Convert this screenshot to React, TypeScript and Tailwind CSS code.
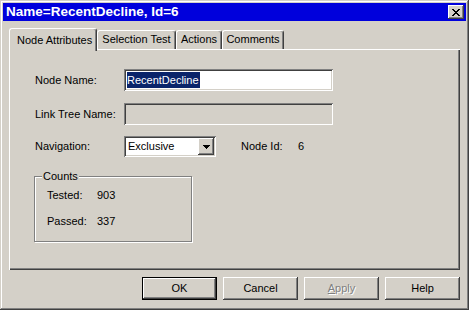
import React from "react";

const raised =
  "shadow-[inset_-1px_-1px_#404040,inset_1px_1px_#ffffff,inset_-2px_-2px_#808080,inset_2px_2px_#d4d0c8]";
const sunken =
  "shadow-[inset_1px_1px_#808080,inset_-1px_-1px_#ffffff,inset_2px_2px_#404040,inset_-2px_-2px_#d4d0c8]";

function CloseGlyph() {
  return (
    <svg width="8" height="7" viewBox="0 0 8 7" shapeRendering="crispEdges">
      <path
        d="M0 0h2v1H0zM6 0h2v1H6zM1 1h2v1H1zM5 1h2v1H5zM2 2h4v1H2zM3 3h2v1H3zM2 4h4v1H2zM1 5h2v1H1zM5 5h2v1H5zM0 6h2v1H0zM6 6h2v1H6z"
        fill="#000"
      />
    </svg>
  );
}

function DownArrow() {
  return (
    <svg width="7" height="4" viewBox="0 0 7 4" shapeRendering="crispEdges">
      <path d="M0 0h7v1H0zM1 1h5v1H1zM2 2h3v1H2zM3 3h1v1H3z" fill="#000" />
    </svg>
  );
}

function Tab({ label, width }: { label: string; width: string }) {
  return (
    <div
      className={`${width} h-[19px] flex items-center justify-center border-l border-t border-white border-r border-r-[#404040] rounded-t-[3px] shadow-[inset_-1px_0_#808080] pb-[1px]`}
    >
      {label}
    </div>
  );
}

function Button({ label, isDefault, disabled }: { label: React.ReactNode; isDefault?: boolean; disabled?: boolean }) {
  return (
    <div
      className={`w-[75px] h-[23px] flex items-center justify-center ${
        isDefault ? "border border-black" : ""
      } ${disabled ? "text-[#808080] [text-shadow:1px_1px_#ffffff]" : "text-black"}`}
    >
      <div className={`w-full h-full flex items-center justify-center ${raised}`}>{label}</div>
    </div>
  );
}

export default function App() {
  return (
    <div className="w-[469px] h-[310px] bg-[#d4d0c8] p-[3px] flex flex-col font-['Liberation_Sans',Arial,sans-serif] text-[11px] text-black shadow-[inset_-1px_-1px_#404040,inset_1px_1px_#d4d0c8,inset_-2px_-2px_#808080,inset_2px_2px_#ffffff] overflow-hidden">
      {/* title bar */}
      <div className="h-[18px] bg-[#0000dc] flex items-center justify-between pl-[3px] pr-[2px]">
        <span className="text-white font-bold text-[13.5px] leading-none">Name=RecentDecline, Id=6</span>
        <div className={`w-[16px] h-[14px] bg-[#d4d0c8] flex items-center justify-center ${raised}`}>
          <CloseGlyph />
        </div>
      </div>

      <div className="flex flex-col px-[6px] pt-[7px]">
        {/* tabs */}
        <div className="flex items-end h-[21px]">
          <div className="relative z-10 w-[88px] h-[23px] mb-[-2px] bg-[#d4d0c8] flex items-start pt-[3px] pl-[7px] border-l border-t border-white border-r border-r-[#404040] rounded-t-[3px] shadow-[inset_-1px_0_#808080]">
            Node Attributes
          </div>
          <Tab label="Selection Test" width="w-[79px]" />
          <Tab label="Actions" width="w-[46px]" />
          <Tab label="Comments" width="w-[62px]" />
        </div>

        {/* panel */}
        <div className="h-[221px] bg-[#d4d0c8] shadow-[inset_1px_1px_#ffffff,inset_-1px_-1px_#404040,inset_-2px_-2px_#808080] pl-[26px] pt-[20px] flex flex-col">
          <div className="flex items-center h-[22px]">
            <span className="w-[89px]">Node Name:</span>
            <div className={`w-[209px] h-[22px] bg-white flex items-center pl-[3px] ${sunken}`}>
              <span className="bg-[#0a246a] text-white leading-[16px] pr-[1px]">RecentDecline</span>
            </div>
          </div>

          <div className="flex items-center h-[22px] mt-[12px]">
            <span className="w-[89px]">Link Tree Name:</span>
            <div className={`w-[209px] h-[22px] bg-[#d4d0c8] ${sunken}`} />
          </div>

          <div className="flex items-center h-[21px] mt-[11px]">
            <span className="w-[89px]">Navigation:</span>
            <div className={`w-[92px] h-[21px] bg-white flex items-center justify-between p-[2px] ${sunken}`}>
              <span className="pl-[2px]">Exclusive</span>
              <div className={`w-[16px] h-[17px] bg-[#d4d0c8] flex items-center justify-center ${raised}`}>
                <DownArrow />
              </div>
            </div>
            <span className="ml-[25px] w-[57px]">Node Id:</span>
            <span>6</span>
          </div>

          {/* counts group */}
          <div className="relative mt-[19px] -ml-[1px] w-[158px] h-[66px] border border-[#808080] shadow-[1px_1px_#ffffff,inset_1px_1px_#ffffff] pl-[12px] pt-[11px] flex flex-col">
            <span className="absolute left-[7px] top-[-7px] bg-[#d4d0c8] px-[1px] leading-[13px]">Counts</span>
            <div className="flex items-center h-[14px]">
              <span className="w-[50px]">Tested:</span>
              <span>903</span>
            </div>
            <div className="flex items-center h-[14px] mt-[12px]">
              <span className="w-[50px]">Passed:</span>
              <span>337</span>
            </div>
          </div>
        </div>

        {/* buttons */}
        <div className="flex justify-end gap-[6px] mt-[7px]">
          <Button label="OK" isDefault />
          <Button label="Cancel" />
          <Button
            label={
              <span>
                <span className="underline">A</span>pply
              </span>
            }
            disabled
          />
          <Button label="Help" />
        </div>
      </div>
    </div>
  );
}
